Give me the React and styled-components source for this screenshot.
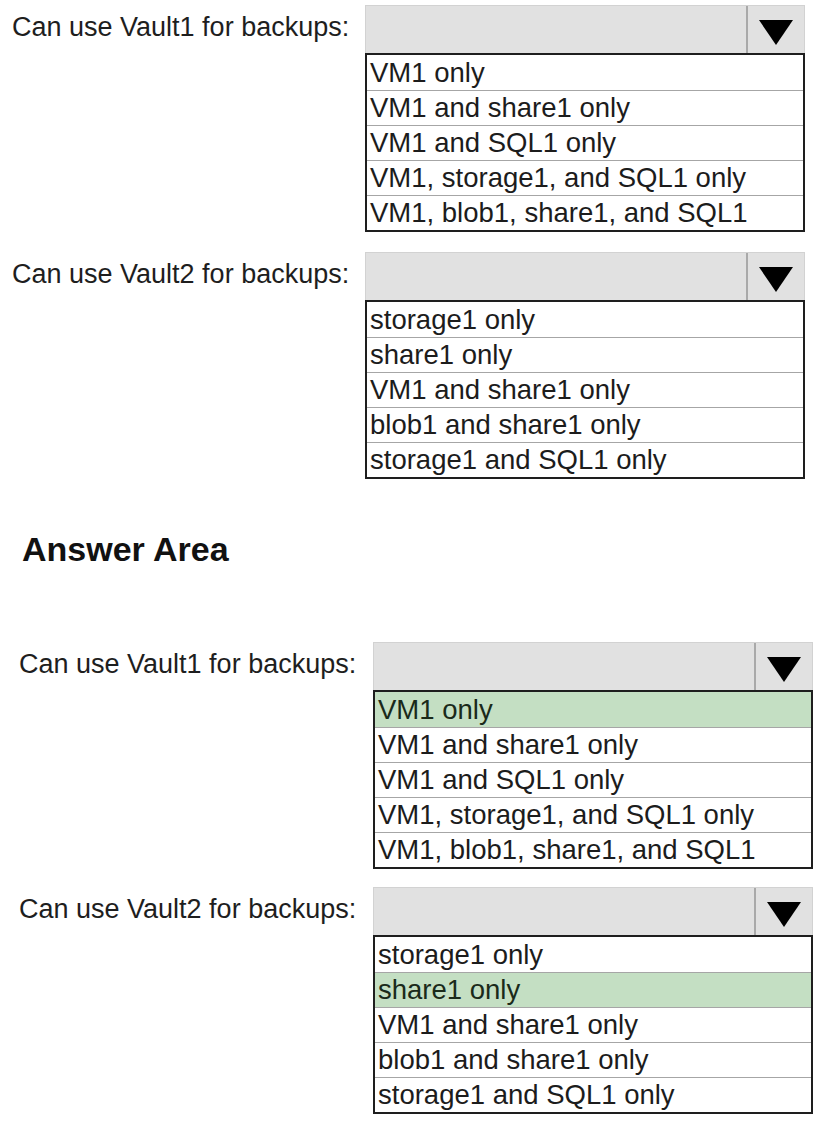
import * as React from 'react';
import styled, { createGlobalStyle } from 'styled-components';

const GlobalStyle = createGlobalStyle`
  html, body {
    margin: 0;
    padding: 0;
    background: #ffffff;
  }
  body {
    font-family: "Liberation Sans", Arial, sans-serif;
    color: #1c1c1c;
  }
`;

const Page = styled.div`
  width: 824px;
  padding-top: 5px;
  box-sizing: border-box;
`;

const Question = styled.div`
  display: flex;
  align-items: flex-start;
  padding-left: ${(p) => p.$indent}px;
  margin-top: ${(p) => p.$gap || 0}px;
`;

const Label = styled.div`
  width: ${(p) => p.$width}px;
  height: 48px;
  line-height: 44px;
  font-size: 27px;
  white-space: nowrap;
  color: #1e1e1e;
`;

const Dropdown = styled.div`
  width: 440px;
  display: flex;
  flex-direction: column;
`;

const Select = styled.div`
  display: flex;
  height: 48px;
  box-sizing: border-box;
  background: #e1e1e1;
  border: 1px solid #d2d2d2;
  border-bottom: none;
`;

const Field = styled.div`
  flex: 1;
`;

const ArrowButton = styled.div`
  width: 58px;
  border-left: 2px solid #a9a9a9;
  display: flex;
  justify-content: center;
  padding-top: 14px;
  box-sizing: border-box;
`;

const List = styled.div`
  border: 2px solid #1e1e1e;
  background: #ffffff;
`;

const Option = styled.div`
  height: 35px;
  line-height: 35px;
  box-sizing: border-box;
  padding-left: 3px;
  font-size: 27.5px;
  white-space: nowrap;
  color: ${(p) => (p.$selected ? '#1a2a1a' : '#1c1c1c')};
  background: ${(p) => (p.$selected ? '#c4dfc3' : '#ffffff')};

  & + & {
    border-top: 1px solid #a6a6a6;
    line-height: 34px;
  }
`;

const Heading = styled.h2`
  margin: 50px 0 0;
  padding-left: 22px;
  font-size: 34px;
  line-height: 40px;
  font-weight: bold;
  color: #111111;
`;

const Arrow = () => (
  <svg width="34" height="25" viewBox="0 0 34 25">
    <polygon points="0,0 34,0 17,25" fill="#000000" />
  </svg>
);

const vault1Options = [
  'VM1 only',
  'VM1 and share1 only',
  'VM1 and SQL1 only',
  'VM1, storage1, and SQL1 only',
  'VM1, blob1, share1, and SQL1',
];

const vault2Options = [
  'storage1 only',
  'share1 only',
  'VM1 and share1 only',
  'blob1 and share1 only',
  'storage1 and SQL1 only',
];

const DropQuestion = ({ label, options, selected, indent, labelWidth, gap }) => (
  <Question $indent={indent} $gap={gap}>
    <Label $width={labelWidth}>{label}</Label>
    <Dropdown>
      <Select>
        <Field />
        <ArrowButton>
          <Arrow />
        </ArrowButton>
      </Select>
      <List>
        {options.map((opt) => (
          <Option key={opt} $selected={opt === selected}>
            {opt}
          </Option>
        ))}
      </List>
    </Dropdown>
  </Question>
);

export default function App() {
  return (
    <Page>
      <GlobalStyle />
      <DropQuestion
        label="Can use Vault1 for backups:"
        options={vault1Options}
        indent={12}
        labelWidth={353}
      />
      <DropQuestion
        label="Can use Vault2 for backups:"
        options={vault2Options}
        indent={12}
        labelWidth={353}
        gap={20}
      />

      <Heading>Answer Area</Heading>

      <DropQuestion
        label="Can use Vault1 for backups:"
        options={vault1Options}
        selected="VM1 only"
        indent={19}
        labelWidth={354}
        gap={73}
      />
      <DropQuestion
        label="Can use Vault2 for backups:"
        options={vault2Options}
        selected="share1 only"
        indent={19}
        labelWidth={354}
        gap={18}
      />
    </Page>
  );
}
